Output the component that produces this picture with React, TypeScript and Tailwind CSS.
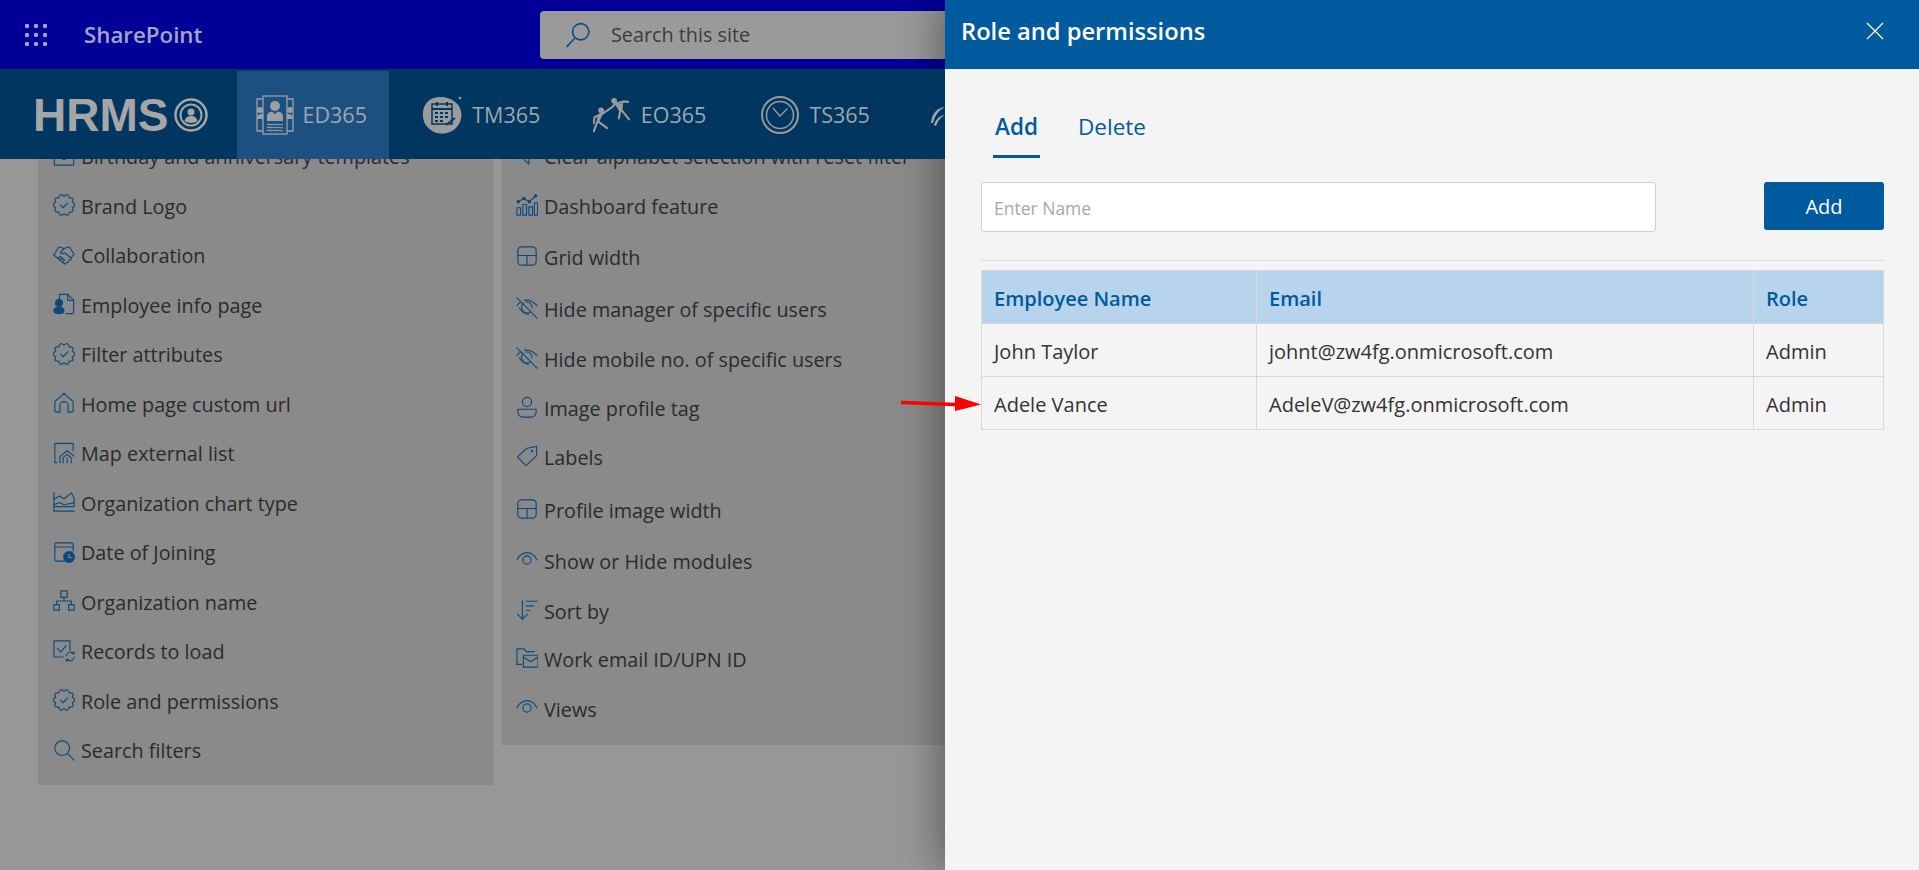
import React from "react";

const S = ({ children, className = "w-[22px] h-[22px]" }: { children: React.ReactNode; className?: string }) => (
  <svg viewBox="0 0 24 24" fill="none" stroke="currentColor" strokeWidth="1.250" strokeLinecap="round" strokeLinejoin="round" className={`${className} shrink-0`}>
    {children}
  </svg>
);

const badgePath = (() => {
  const n = 10;
  let d = "";
  for (let k = 0; k < n; k++) {
    const a0 = (k / n) * Math.PI * 2;
    const a1 = ((k + 1) / n) * Math.PI * 2;
    const am = (a0 + a1) / 2;
    const p = (a: number, r: number) => `${(12 + r * Math.sin(a)).toFixed(2)} ${(12 - r * Math.cos(a)).toFixed(2)}`;
    d += (k === 0 ? `M${p(a0, 9.5)}` : "") + `Q${p(am, 14.5)} ${p(a1, 9.5)}`;
  }
  return d + "Z";
})();

const Badge = () => (
  <S>
    <path d={badgePath} />
    <path d="M8 12.200l3 2.800 5-5.400" />
  </S>
);
const Mail = () => (
  <S>
    <path d="M1.500 4h21v18h-21z" />
    <path d="M1.500 10l10.500 6 10.500-6" />
  </S>
);
const Shake = () => (
  <S>
    <path d="M1 12L6.500 3l5.500 2 5.500-2L23 11l-3 4" />
    <path d="M12 5L8 9.500c1.500 1.500 3 1.500 4.500 0l7.500 6-1 2-2 .5-.5 2-2 .5-1.500 1.500L5 15.500 1 12" />
    <path d="M5.500 15.500l2.500-2 2 2-2.500 2M10 15.500l2.500 2-2 2.500" />
  </S>
);
const EmpFile = () => (
  <S>
    <path d="M7 6.500V1.500h9l6.500 6.500v13a1.500 1.500 0 0 1-1.500 1.500h-7" />
    <path d="M16 1.500V8h6.500" />
    <circle cx="6.500" cy="11" r="3.800" fill="currentColor" />
    <path d="M1 19c0-2.500 2-3.500 5.500-3.500S12 16.500 12 19s-1.500 3.500-5.500 3.500S1 21.500 1 19z" fill="currentColor" />
  </S>
);
const Home = () => (
  <S>
    <path d="M2 10.500L12 1.500l10 9v10a1.500 1.500 0 0 1-1.500 1.500h-4v-7a4.500 4.500 0 0 0-9 0v7h-4A1.500 1.500 0 0 1 2 20.500z" />
  </S>
);
const MapList = () => (
  <S>
    <path d="M4 22.500H2v-21h20v8" />
    <path d="M7.500 22.500V16l8-6.500 7.500 6M11 22.500V17l4.500-3.500 5 4.500M15.500 17.500v5M20 19.500v3" />
  </S>
);
const AreaC = () => (
  <S>
    <path d="M1 1.500v20.500h22" />
    <path d="M1 9l6-3.500 5 3 8-6.500 3 6v9H1" />
    <path d="M1 15l6-2.500 5 2.500 11-2" />
  </S>
);
const DateJ = () => (
  <S>
    <path d="M22 11V4a2 2 0 0 0-2-2H4a2 2 0 0 0-2 2v16a2 2 0 0 0 2 2h8" />
    <path d="M2 6.500h20" />
    <circle cx="17.500" cy="17.500" r="6.500" fill="currentColor" stroke="none" />
    <path d="M17.500 14.500v3.500h3" stroke="#8a8a8a" />
  </S>
);
const Org = () => (
  <S>
    <rect x="8.500" y="1" width="7" height="7" />
    <rect x="1" y="16" width="6" height="6" />
    <rect x="17" y="16" width="6" height="6" />
    <path d="M12 8v4M4 16v-4h16v4" />
  </S>
);
const Records = () => (
  <S>
    <path d="M11 18.500H1V1h17.500v10" />
    <path d="M5 9.500l3.500 3.500L14 6.500" />
    <path d="M14.500 17a4.500 4.500 0 0 1 8-2M23 12.500V15h-2.500M23 19a4.500 4.500 0 0 1-8 2M14.500 23.500V21h2.500" />
  </S>
);
const Search = () => (
  <S>
    <circle cx="10" cy="10" r="8" />
    <path d="M16 16l7 7" />
  </S>
);
const Alpha = () => (
  <S>
    <path d="M14 1v20M14 21l-5-5" />
  </S>
);
const Dash = () => (
  <S>
    <path d="M1 15h4v8H1zM7.500 11.500h4V23h-4zM14 14h4v9h-4zM20 9.500h3.500V23H20z" />
    <path d="M2.500 8.500L8.500 5l6 3.500L21.500 2" />
    <circle cx="2.500" cy="8.500" r="1.300" fill="currentColor" />
    <circle cx="8.500" cy="5" r="1.300" fill="currentColor" />
    <circle cx="14.500" cy="8.500" r="1.300" fill="currentColor" />
    <circle cx="21.500" cy="2" r="1.300" fill="currentColor" />
  </S>
);
const GridW = () => (
  <S>
    <rect x="2" y="2" width="20" height="20" rx="4" />
    <path d="M2 11.500h20M12 11.500V22" />
  </S>
);
const EyeOff = () => (
  <S>
    <path d="M1 1l22 22" />
    <path d="M1 9.500C2 8 3.500 6.500 5 5.500M9 3.500c5-.5 10 1.500 14 6M3.500 12c3 4 6 6.500 10 7" />
    <path d="M8 7a6 6 0 0 0 8 9M11 5.500a6 6 0 0 1 6.500 6.500" />
  </S>
);
const EyeO = () => (
  <S>
    <path d="M1 12C4 6 8 4 12 4s8 2 11 8" />
    <circle cx="12" cy="12" r="4.500" />
  </S>
);
const User = () => (
  <S>
    <circle cx="12" cy="6.500" r="5" />
    <path d="M2 14.500h20v3a5.500 5.500 0 0 1-5.500 5.500h-9A5.500 5.500 0 0 1 2 17.500z" />
  </S>
);
const Tag = () => (
  <S>
    <path d="M1.500 13L12 3.500l10.500-2v10L11 22.500z" />
    <circle cx="17.500" cy="6.500" r=".8" fill="currentColor" />
  </S>
);
const Sort = () => (
  <S>
    <path d="M7 2v20M1.500 16.500L7 22l5.500-5.500M11 2.500h12M11 7.500h8M11 12.500h4" />
  </S>
);
const WorkM = () => (
  <S>
    <path d="M6 19H1V2h8l2 3h9" />
    <rect x="8" y="9" width="16" height="13" />
    <path d="M8 11l8 5 8-5" />
  </S>
);

const leftRows: [string, React.ReactNode][] = [
  ["Birthday and anniversary templates", <Mail />],
  ["Brand Logo", <Badge />],
  ["Collaboration", <Shake />],
  ["Employee info page", <EmpFile />],
  ["Filter attributes", <Badge />],
  ["Home page custom url", <Home />],
  ["Map external list", <MapList />],
  ["Organization chart type", <AreaC />],
  ["Date of Joining", <DateJ />],
  ["Organization name", <Org />],
  ["Records to load", <Records />],
  ["Role and permissions", <Badge />],
  ["Search filters", <Search />],
];

const rightRows: [string, React.ReactNode, string][] = [
  ["Clear alphabet selection with reset filter", <Alpha />, "h-[49px]"],
  ["Dashboard feature", <Dash />, "h-[50px]"],
  ["Grid width", <GridW />, "h-[52px]"],
  ["Hide manager of specific users", <EyeOff />, "h-[52px]"],
  ["Hide mobile no. of specific users", <EyeOff />, "h-[48px]"],
  ["Image profile tag", <User />, "h-[50px]"],
  ["Labels", <Tag />, "h-[48px]"],
  ["Profile image width", <GridW />, "h-[58px]"],
  ["Show or Hide modules", <EyeO />, "h-[44px]"],
  ["Sort by", <Sort />, "h-[56px]"],
  ["Work email ID/UPN ID", <WorkM />, "h-[40px]"],
  ["Views", <EyeO />, "h-[60px]"],
];

const Row = ({ label, icon, h }: { label: string; icon: React.ReactNode; h: string }) => (
  <div className={`flex items-center gap-[6px] whitespace-nowrap ${h}`}>
    <span className="text-[#0d4a7c] -mt-[3px]">{icon}</span>
    <span>{label}</span>
  </div>
);

const Waffle = () => (
  <svg viewBox="0 0 24 22" className="w-[24px] h-[22px]" fill="#a4a4c4">
    {[2, 11, 20].map((y) => [3, 12, 21].map((x) => <circle key={`${x}-${y}`} cx={x} cy={y} r="2.200" />))}
  </svg>
);

const NavItem = ({ icon, label, cls }: { icon: React.ReactNode; label: string; cls: string }) => (
  <div className={`flex items-center h-full ${cls}`}>
    {icon}
    <span className="text-[21.500px] text-[#9ea7ae]">{label}</span>
  </div>
);

const Logo = () => (
  <div className="flex items-center ml-[33px] w-[204px] text-[#a6a6a6]">
    <span className="text-[46px] leading-none font-bold font-['Liberation_Sans',sans-serif]">HRMS</span>
    <svg viewBox="0 0 34 34" className="w-[34px] h-[34px] ml-[6px]" fill="none" stroke="currentColor">
      <circle cx="17" cy="17" r="15.500" strokeWidth="2.500" />
      <circle cx="17" cy="17" r="10.500" strokeWidth="2" />
      <circle cx="17" cy="14" r="3.500" fill="currentColor" stroke="none" />
      <path d="M10.500 23c1-4 3.500-5 6.500-5s5.500 1 6.500 5c-3 2.500-10 2.500-13 0z" fill="currentColor" stroke="none" />
    </svg>
  </div>
);

const EdIcon = () => (
  <svg viewBox="0 0 38 40" className="w-[38px] h-[40px] mr-[9px]" fill="none" stroke="#9a9fa4" strokeWidth="1.300">
    <path d="M7 4H1v32h6M31 4h6v32h-6" />
    <circle cx="4" cy="15" r="3" fill="#9a9fa4" stroke="none" />
    <circle cx="34" cy="15" r="3" fill="#9a9fa4" stroke="none" />
    <path d="M1 24c0-4 2-5 6-5v5zM37 24c0-4-2-5-6-5v5z" fill="#9a9fa4" stroke="none" />
    <rect x="7" y="1" width="24" height="38" />
    <circle cx="19" cy="11" r="5" fill="#9a9fa4" stroke="none" />
    <path d="M11 26v-5c0-3 3-4 5-4.500l3 2.500 3-2.500c2 .5 5 1.500 5 4.500v5z" fill="#9a9fa4" stroke="none" />
    <path d="M11 29.500c2-1.500 3 1 5 0s3 1 5 0 3 1 6 0M11 32.500c2-1.500 3 1 5 0s3 1 5 0 3 1 6 0M11 35.500c2-1.500 3 1 5 0s3 1 5 0 3 1 6 0" strokeWidth="1.200" />
  </svg>
);

const TmIcon = () => (
  <svg viewBox="0 0 44 40" className="w-[44px] h-[40px] mr-[6px]">
    <path d="M1 17C2 7 10 1 20 2c6 .5 13 3 17 9 4 7 3 16-3 22-6 6-15 7-22 4C4 33 0 26 1 17z" fill="#9c9c9c" />
    <circle cx="38" cy="3" r="1.300" fill="#9c9c9c" />
    <rect x="10" y="9" width="20" height="20" fill="none" stroke="#003660" strokeWidth="1.500" />
    <path d="M10 14h20M15 7v4M25 7v4M13 18h3M18 18h3M23 18h3M13 22h3M18 22h3M23 22h3M13 26h3M18 26h3" stroke="#003660" strokeWidth="2" fill="none" />
    <path d="M24 30l9-7" stroke="#003660" strokeWidth="1.800" />
  </svg>
);

const EoIcon = () => (
  <svg viewBox="0 0 40 36" className="w-[39px] h-[35px] mr-[9px]" fill="#9a9a9a" stroke="#9a9a9a" strokeLinecap="round" strokeLinejoin="round">
    <circle cx="8.300" cy="12.700" r="3" stroke="none" />
    <circle cx="21.700" cy="2.900" r="3" stroke="none" />
    <path d="M6 18l3-1.500L19 10l4-4 8-2.500 5 .5" fill="none" strokeWidth="2.200" />
    <path d="M25 7l3 6-1.500 8M29 12l8 10" fill="none" strokeWidth="2.200" />
    <path d="M23 7l8-2-1 9-3 0z" stroke="none" />
    <path d="M8 17L4.500 24 0.800 34M5 24l9.500 7M7 17L1.500 20l-1 6" fill="none" strokeWidth="2.200" />
    <path d="M5 17l5 0-4 8-2 0z" stroke="none" />
  </svg>
);

const TsIcon = () => (
  <svg viewBox="0 0 38 40" className="w-[38px] h-[40px] mr-[10px]" fill="none" stroke="#9a9a9a">
    <circle cx="19" cy="20" r="18" strokeWidth="2" />
    <circle cx="19" cy="20" r="13.500" strokeWidth="1.500" />
    <path d="M12 13l7 8 7.500-7.500" strokeWidth="1.300" />
  </svg>
);

const Td = ({ children, className = "" }: { children: React.ReactNode; className?: string }) => (
  <div className={`flex items-center pl-[12px] pt-[3px] h-[52px] ${className}`}>{children}</div>
);

export default function App() {
  return (
    <div className="relative h-[870px] w-[1919px] overflow-hidden bg-[#989898] font-['Open_Sans','Noto_Sans',sans-serif] text-[19.800px] text-[#2b2b2b]">
      <div className="flex flex-col h-full w-[945px]">
        <header className="flex items-center h-[69px] bg-[#000099] shrink-0">
          <div className="ml-[24px]">
            <Waffle />
          </div>
          <span className="ml-[36px] text-[22.300px] font-semibold text-[#a4a4c4] w-[119px] whitespace-nowrap">SharePoint</span>
          <div className="ml-[337px] flex items-center h-[48px] flex-1 bg-[#9a9a9a] rounded-l-[4px]">
            <svg viewBox="0 0 24 24" className="ml-[25px] w-[26px] h-[26px]" fill="none" stroke="#0d4a7c" strokeWidth="1.500">
              <circle cx="14.500" cy="9" r="7.500" />
              <path d="M9 15L1.500 23" />
            </svg>
            <span className="ml-[20px] text-[19.800px] text-[#3c3c3c]">Search this site</span>
          </div>
        </header>
        <nav className="flex items-stretch h-[90px] bg-[#003660] shrink-0 relative z-10 pt-[2px] overflow-hidden">
          <Logo />
          <NavItem cls="w-[153px] pl-[19px] bg-[#1c5080]" icon={<EdIcon />} label="ED365" />
          <NavItem cls="w-[204px] pl-[33px]" icon={<TmIcon />} label="TM365" />
          <NavItem cls="w-[169px]" icon={<EoIcon />} label="EO365" />
          <NavItem cls="w-[170px]" icon={<TsIcon />} label="TS365" />
          <div className="flex items-center">
            <svg viewBox="0 0 14 24" className="w-[14px] h-[24px]" fill="#9ea7ae">
              <path d="M0 20C1 10 6 5 14 4 8 7 4 12 2 20zM3 22c2-6 5-9 11-10-5 3-7 6-9 11z" />
            </svg>
          </div>
        </nav>
        <main className="flex-1 overflow-hidden">
          <div className="flex gap-[8px] items-start ml-[38px] mt-[-26.500px]">
            <div className="w-[455px] bg-[#8a8a8a] pl-[15px] pb-[9px]">
              {leftRows.map(([l, i]) => (
                <Row key={l} label={l} icon={i} h="h-[49.500px]" />
              ))}
            </div>
            <div className="flex-1 bg-[#8a8a8a] pl-[15px] pb-[5px]">
              {rightRows.map(([l, i, h]) => (
                <Row key={l} label={l} icon={i} h={h} />
              ))}
            </div>
          </div>
        </main>
      </div>

      <aside className="absolute top-0 right-0 bottom-0 w-[974px] bg-[#f4f4f4] flex flex-col shadow-[-8px_0_36px_rgba(0,0,0,0.35)]">
        <div className="flex items-center justify-between h-[69px] bg-[#005a9e] text-white pl-[16px] pr-[35px] shrink-0">
          <span className="text-[23.700px] font-semibold pb-[5px]">Role and permissions</span>
          <svg viewBox="0 0 18 18" className="w-[18px] h-[18px] mb-[8px]" stroke="white" strokeWidth="1.300" fill="none">
            <path d="M1 1l16 16M17 1L1 17" />
          </svg>
        </div>
        <div className="pl-[36px] pr-[35px]">
          <div className="flex gap-[38px] pl-[12px] h-[89px] text-[#005a9e] text-[22.500px]">
            <div className="flex items-center h-full pt-[30px] border-b-[3px] border-[#005a9e] font-semibold w-[47px] justify-center">Add</div>
            <div className="flex items-center h-full pt-[30px] pb-[3px]">Delete</div>
          </div>
          <div className="flex justify-between items-start mt-[24px] pb-[28px] border-b border-[#dcdcdc]">
            <input
              placeholder="Enter Name"
              className="w-[675px] h-[50px] bg-white border border-[#d0d0d0] rounded-[3px] px-[12px] pt-[2px] text-[17.500px] placeholder:text-[#a8a8a8] outline-none"
            />
            <button className="w-[120px] h-[48px] bg-[#005a9e] text-white rounded-[3px] text-[20px] pt-[2px]">Add</button>
          </div>
          <div className="relative mt-[9px] border border-[#d9d9d9] text-[20px] text-[#333333]">
            <div className="grid grid-cols-[275px_497px_1fr] bg-[#b8d4ed] text-[#005a9e] font-semibold">
              <Td className="border-r border-[#d9d9d9]">Employee Name</Td>
              <Td className="border-r border-[#d9d9d9]">Email</Td>
              <Td>Role</Td>
            </div>
            <div className="grid grid-cols-[275px_497px_1fr] border-t border-[#d9d9d9]">
              <Td className="border-r border-[#d9d9d9]">John Taylor</Td>
              <Td className="border-r border-[#d9d9d9]">johnt@zw4fg.onmicrosoft.com</Td>
              <Td>Admin</Td>
            </div>
            <div className="grid grid-cols-[275px_497px_1fr] border-t border-[#d9d9d9]">
              <Td className="border-r border-[#d9d9d9]">Adele Vance</Td>
              <Td className="border-r border-[#d9d9d9]">AdeleV@zw4fg.onmicrosoft.com</Td>
              <Td>Admin</Td>
            </div>
          </div>
        </div>
      </aside>

      <svg viewBox="0 0 80 16" className="absolute left-[901px] top-[396px] w-[80px] h-[16px]">
        <path d="M1 6.500L54 8.500" stroke="#fe0000" strokeWidth="3.500" strokeLinecap="round" />
        <path d="M54 0L80 8.500 54 15z" fill="#fe0000" />
      </svg>
    </div>
  );
}
